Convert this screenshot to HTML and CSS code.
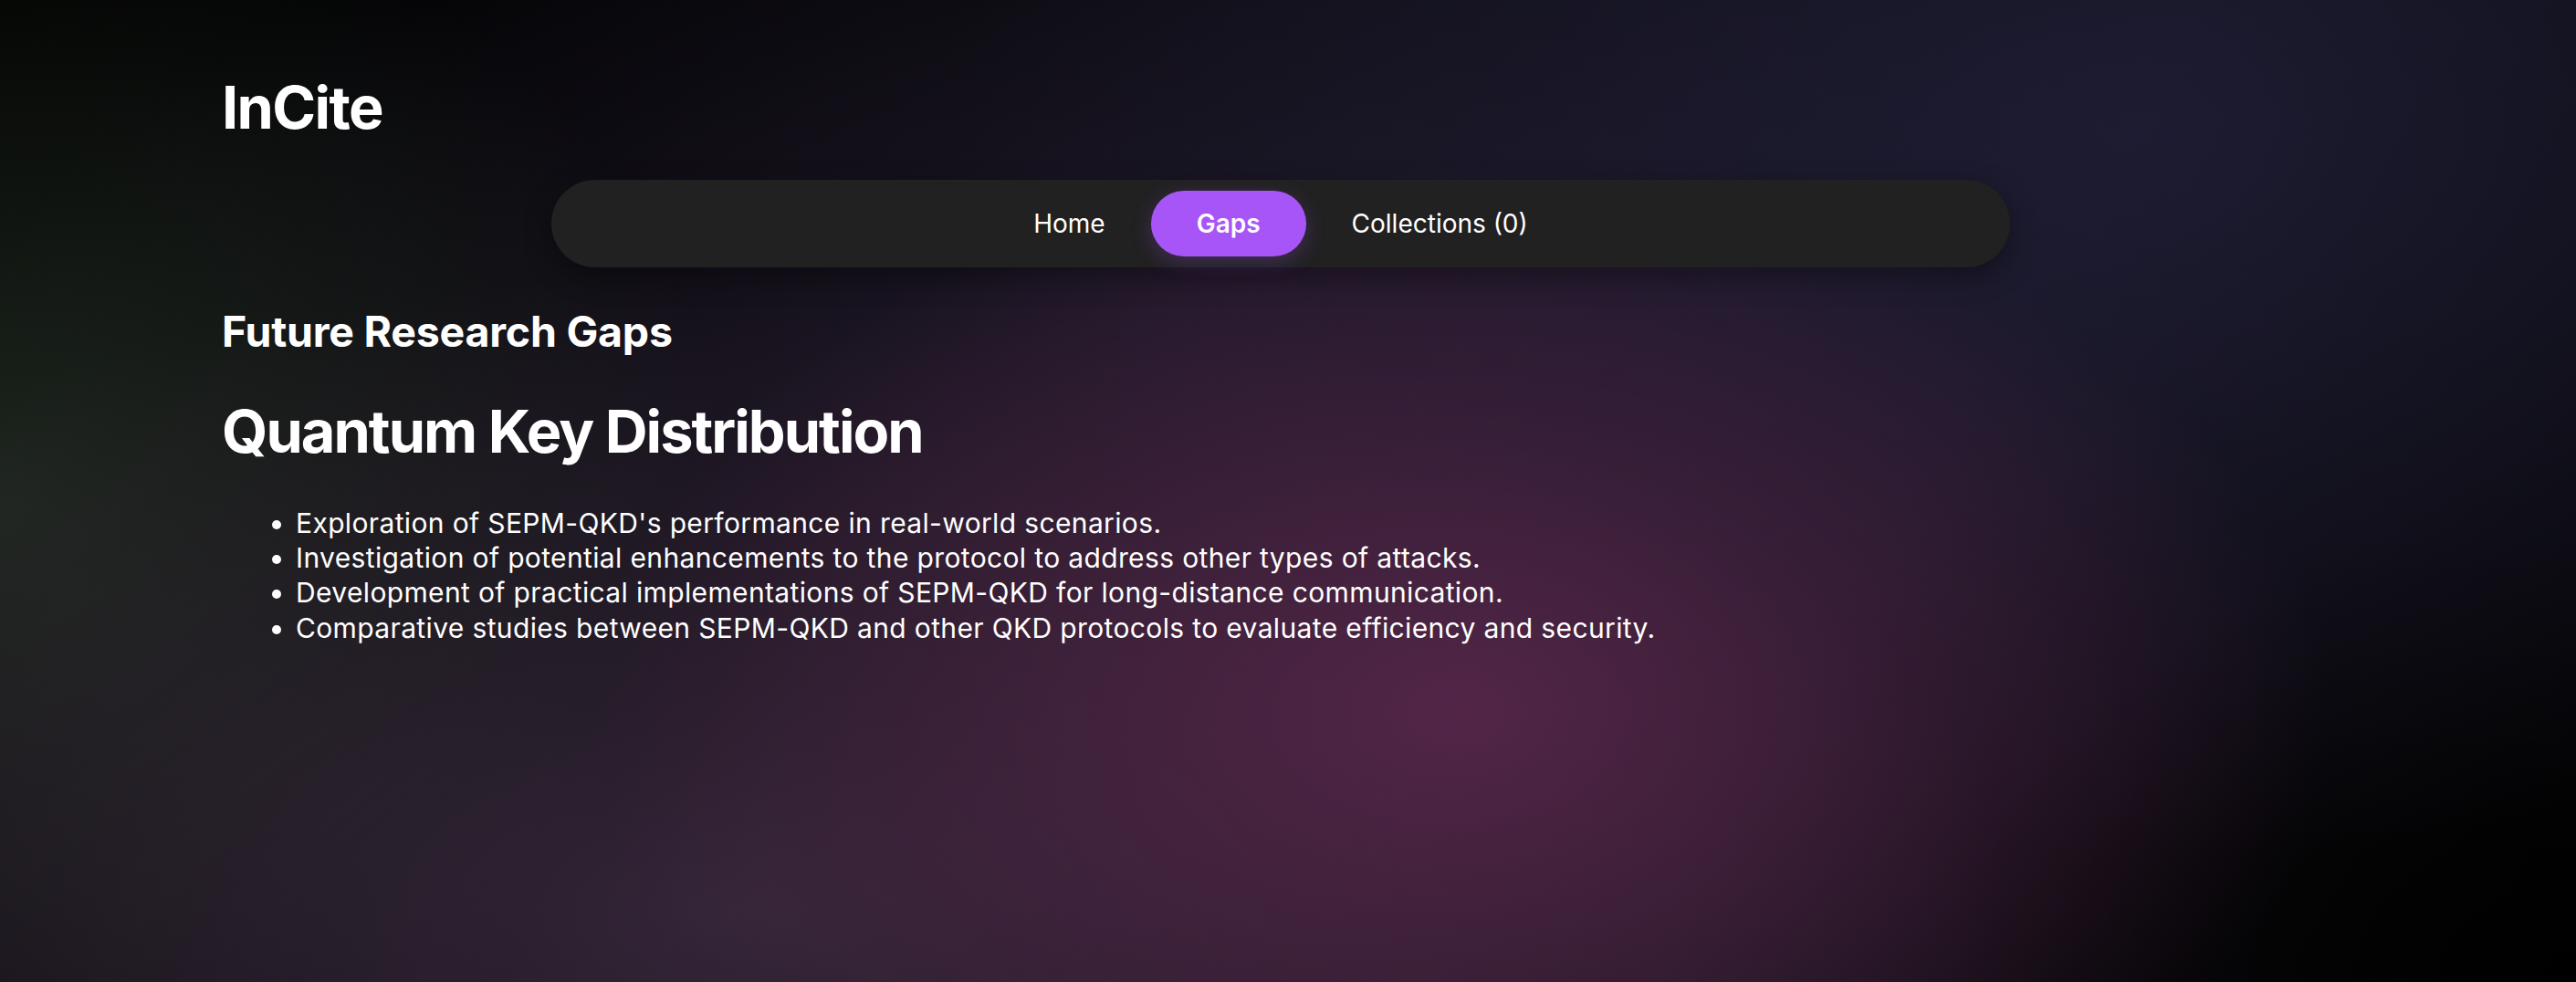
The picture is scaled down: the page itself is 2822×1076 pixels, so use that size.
FILE: index.html
```html
<!DOCTYPE html>
<html lang="en">
<head>
<meta charset="utf-8">
<title>InCite</title>
<link rel="stylesheet" href="styles.css">
</head>
<body>
<div class="page">
  <header class="brand">InCite</header>
  <nav class="nav">
    <a class="nav-item">Home</a>
    <a class="nav-item active">Gaps</a>
    <a class="nav-item">Collections (0)</a>
  </nav>
  <main class="content">
    <h2 class="section-title">Future Research Gaps</h2>
    <h1 class="topic">Quantum Key Distribution</h1>
    <ul class="gaps">
      <li>Exploration of SEPM-QKD's performance in real-world scenarios.</li>
      <li>Investigation of potential enhancements to the protocol to address other types of attacks.</li>
      <li>Development of practical implementations of SEPM-QKD for long-distance communication.</li>
      <li>Comparative studies between SEPM-QKD and other QKD protocols to evaluate efficiency and security.</li>
    </ul>
  </main>
</div>
</body>
</html>
```

FILE: styles.css
```css
html, body {
  margin: 0;
  padding: 0;
  height: 100%;
}
body {
  font-family: Inter, "Noto Sans", sans-serif;
  color: #ffffff;
  background-color: #050507;
  background-image:
    radial-gradient(ellipse 950px 600px at 1600px 780px, rgba(92, 40, 78, 0.85), rgba(92, 40, 78, 0) 100%),
    radial-gradient(ellipse 1400px 700px at 800px 1000px, rgba(62, 44, 66, 0.8), rgba(62, 44, 66, 0) 100%),
    radial-gradient(ellipse 1300px 800px at 2350px 140px, rgba(32, 32, 58, 0.75), rgba(32, 32, 58, 0) 100%),
    radial-gradient(ellipse 800px 700px at 0px 560px, rgba(34, 44, 34, 0.85), rgba(34, 44, 34, 0) 100%),
    radial-gradient(ellipse 1300px 500px at 1300px 350px, rgba(40, 30, 52, 0.6), rgba(40, 30, 52, 0) 100%),
    radial-gradient(ellipse 700px 500px at 2822px 1076px, rgba(0, 0, 0, 0.9), rgba(0, 0, 0, 0) 100%),
    linear-gradient(120deg, #000000 0%, #0b0b10 40%, #120f18 70%, #030303 100%);
  overflow: hidden;
}
.page {
  padding: 82px 259px 0 243px;
  display: flex;
  flex-direction: column;
}
.brand {
  font-size: 64.8px;
  line-height: 72px;
  font-weight: 700;
  letter-spacing: -0.025em;
}
.nav {
  align-self: center;
  width: 1598px;
  margin-top: 43px;
  height: 96px;
  box-sizing: border-box;
  padding: 12px;
  border-radius: 48px;
  background: #212121;
  box-shadow: 0 10px 30px rgba(0, 0, 0, 0.35);
  display: flex;
  justify-content: center;
  align-items: stretch;
}
.nav-item {
  display: flex;
  align-items: center;
  padding: 0 50px;
  font-size: 28px;
  font-weight: 400;
  color: #ffffff;
  border-radius: 36px;
}
.nav-item.active {
  background: #a855f7;
  font-weight: 600;
  box-shadow: 0 6px 22px rgba(168, 85, 247, 0.25);
}
.content {
  display: flex;
  flex-direction: column;
}
.section-title {
  margin: 42px 0 0;
  font-size: 46.5px;
  line-height: 57.6px;
  font-weight: 700;
  letter-spacing: -0.005em;
}
.topic {
  margin: 44px 0 0;
  font-size: 64.8px;
  line-height: 72px;
  font-weight: 700;
  letter-spacing: -0.03em;
}
.gaps {
  margin: 45px 0 0;
  padding-left: 81px;
  list-style: disc;
  font-size: 30px;
  line-height: 38.4px;
  letter-spacing: 0.012em;
}
```
